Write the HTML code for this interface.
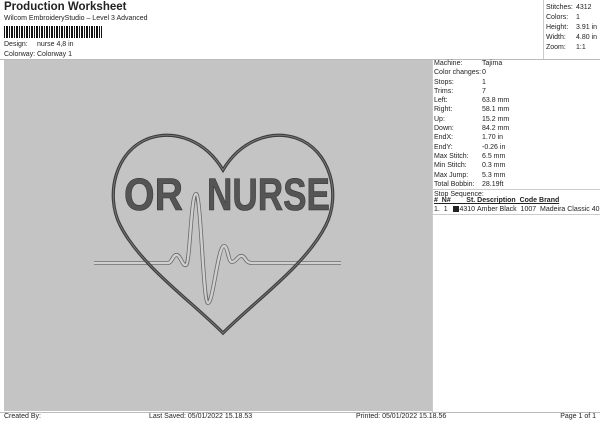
<!DOCTYPE html><html><head><style>
body{margin:0;width:600px;height:424px;background:#fff;font-family:"Liberation Sans",sans-serif;color:#222;position:relative;overflow:hidden;font-size:7px}
.a{position:absolute;white-space:nowrap}
</style></head><body>
<div class="a" style="left:4px;top:1px;font-size:11.5px;font-weight:bold">Production Worksheet</div>
<div class="a" style="left:4px;top:15px">Wilcom EmbroideryStudio – Level 3 Advanced</div>
<div class="a" style="left:4px;top:26px;width:98px;height:12px;background:repeating-linear-gradient(90deg,#111 0 1px,#fff 1px 2px,#111 2px 4px,#fff 4px 5px)"></div>
<div class="a" style="left:4px;top:41px">Design:</div><div class="a" style="left:37px;top:41px">nurse 4,8 in</div>
<div class="a" style="left:4px;top:51px">Colorway:</div><div class="a" style="left:37px;top:51px">Colorway 1</div>
<div class="a" style="left:0;top:59px;width:600px;border-top:1px solid #bbb"></div>
<div class="a" style="left:543px;top:0;height:59px;border-left:1px solid #ccc"></div>
<div class="a" style="left:546px;top:3px;line-height:10px">Stitches:<br>Colors:<br>Height:<br>Width:<br>Zoom:</div>
<div class="a" style="left:576px;top:3px;line-height:10px">4312<br>1<br>3.91 in<br>4.80 in<br>1:1</div>
<div class="a" style="left:4px;top:60px;width:428px;height:351px;background:#c4c4c4"></div>
<svg class="a" style="left:0;top:0" width="600" height="424">
<g font-family="Liberation Sans" font-weight="bold" font-size="45" fill="#555" stroke="#333" stroke-width="0.6">
<text x="124" y="210" textLength="59" lengthAdjust="spacingAndGlyphs">OR</text>
<text x="207" y="210" textLength="123" lengthAdjust="spacingAndGlyphs">NURSE</text>
</g>
<path d="M94,263 H168 C172,263 173,254 177,255 C181,256 182,266 186,265 C190,264 191,194 196,194 C201,194 203,303 208,303 C213,303 218,246 224,246 C228,246 228,262 232,262 C236,262 238,255 242,256 C246,257 245,263 252,263 H341" fill="none" stroke="#6a6a6a" stroke-width="4"/>
<path d="M94,263 H168 C172,263 173,254 177,255 C181,256 182,266 186,265 C190,264 191,194 196,194 C201,194 203,303 208,303 C213,303 218,246 224,246 C228,246 228,262 232,262 C236,262 238,255 242,256 C246,257 245,263 252,263 H341" fill="none" stroke="#cfcfcf" stroke-width="2.4"/>
<path d="M223,170 C205,140 175,130 150,138 C115,150 105,195 120,225 C140,265 190,300 223,333 C256,300 306,265 326,225 C341,195 331,150 296,138 C271,130 241,140 223,170 Z" fill="none" stroke="#3c3c3c" stroke-width="3.2"/>
<path d="M223,170 C205,140 175,130 150,138 C115,150 105,195 120,225 C140,265 190,300 223,333 C256,300 306,265 326,225 C341,195 331,150 296,138 C271,130 241,140 223,170 Z" fill="none" stroke="#777" stroke-width="1"/>
</svg>
<div class="a" style="left:432px;top:60px;height:352px;border-left:1px solid #ccc"></div>
<div class="a" style="left:434px;top:59px;line-height:9.3px">Machine:<br>Color changes:<br>Stops:<br>Trims:<br>Left:<br>Right:<br>Up:<br>Down:<br>EndX:<br>EndY:<br>Max Stitch:<br>Min Stitch:<br>Max Jump:<br>Total Bobbin:</div>
<div class="a" style="left:482px;top:59px;line-height:9.3px">Tajima<br>0<br>1<br>7<br>63.8 mm<br>58.1 mm<br>15.2 mm<br>84.2 mm<br>1.70 in<br>-0.26 in<br>6.5 mm<br>0.3 mm<br>5.3 mm<br>28.19ft</div>
<div class="a" style="left:432px;top:189px;width:168px;border-top:1px solid #ccc"></div>
<div class="a" style="left:434px;top:191px">Stop Sequence:</div>
<div class="a" style="left:434px;top:196px;font-weight:bold;text-decoration:underline;line-height:9px">#&nbsp;&nbsp;N#&nbsp;&nbsp;&nbsp;&nbsp;&nbsp;&nbsp;&nbsp;&nbsp;St.&nbsp;Description&nbsp;&nbsp;Code&nbsp;Brand</div>
<div class="a" style="left:434px;top:205px;line-height:9px">1.&nbsp;&nbsp;1&nbsp;&nbsp;&nbsp;<span style="display:inline-block;width:6px;height:6px;background:#222;vertical-align:-1px"></span>4310&nbsp;Amber Black&nbsp;&nbsp;1007&nbsp;&nbsp;Madeira Classic 40</div>
<div class="a" style="left:432px;top:214px;width:168px;border-top:1px solid #ccc"></div>
<div class="a" style="left:0;top:412px;width:600px;border-top:1px solid #bbb"></div>
<div class="a" style="left:4px;top:413px">Created By:</div>
<div class="a" style="left:149px;top:413px">Last Saved: 05/01/2022 15.18.53</div>
<div class="a" style="left:356px;top:413px">Printed: 05/01/2022 15.18.56</div>
<div class="a" style="right:4px;top:413px">Page 1 of 1</div>
</body></html>
